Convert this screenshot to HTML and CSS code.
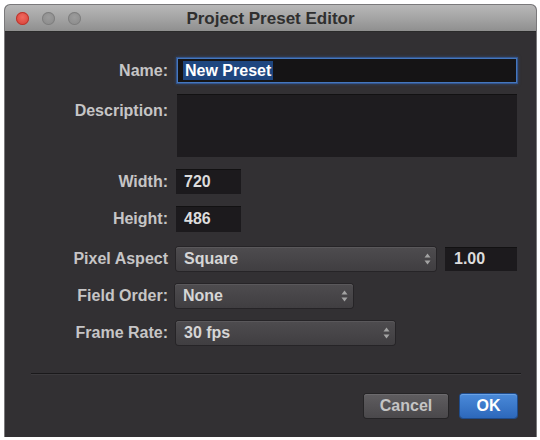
FILE: index.html
```html
<!DOCTYPE html>
<html>
<head>
<meta charset="utf-8">
<link rel="stylesheet" href="styles.css">
</head>
<body>
<div class="window">
  <div class="titlebar">
    <div class="lights">
      <span class="light close"></span>
      <span class="light"></span>
      <span class="light"></span>
    </div>
    <div class="title">Project Preset Editor</div>
    <div></div>
  </div>
  <div class="content">
    <div class="form">
      <div class="row">
        <div class="label">Name:</div>
        <div class="field name-field"><span class="sel">New Preset</span></div>
      </div>
      <div class="row row-top">
        <div class="label label-top">Description:</div>
        <div class="field desc-field"></div>
      </div>
      <div class="row">
        <div class="label">Width:</div>
        <div class="field num-field">720</div>
      </div>
      <div class="row">
        <div class="label">Height:</div>
        <div class="field num-field tall">486</div>
      </div>
      <div class="row popup-row first-popup">
        <div class="label">Pixel Aspect</div>
        <div class="pair">
          <div class="popup pa-popup"><span>Square</span>
            <svg class="arrows" width="7" height="12" viewBox="0 0 7 12"><path d="M3.5 0.5 L6.5 4.5 L0.5 4.5 Z M3.5 11.5 L6.5 7.5 L0.5 7.5 Z" fill="#a3a3a3"/></svg>
          </div>
          <div class="field ratio-field">1.00</div>
        </div>
      </div>
      <div class="row popup-row">
        <div class="label">Field Order:</div>
        <div class="popup fo-popup"><span>None</span>
          <svg class="arrows" width="7" height="12" viewBox="0 0 7 12"><path d="M3.5 0.5 L6.5 4.5 L0.5 4.5 Z M3.5 11.5 L6.5 7.5 L0.5 7.5 Z" fill="#a3a3a3"/></svg>
        </div>
      </div>
      <div class="row popup-row">
        <div class="label">Frame Rate:</div>
        <div class="popup fr-popup"><span>30 fps</span>
          <svg class="arrows" width="7" height="12" viewBox="0 0 7 12"><path d="M3.5 0.5 L6.5 4.5 L0.5 4.5 Z M3.5 11.5 L6.5 7.5 L0.5 7.5 Z" fill="#a3a3a3"/></svg>
        </div>
      </div>
    </div>
    <div class="sep"></div>
    <div class="buttons">
      <div class="btn cancel">Cancel</div>
      <div class="btn ok">OK</div>
    </div>
  </div>
</div>
</body>
</html>
```
FILE: styles.css
```css
html, body {
  margin: 0;
  padding: 0;
  background: #ffffff;
}
body {
  padding: 5px 0 0 5px;
  font-family: "Liberation Sans", Arial, sans-serif;
  font-weight: bold;
  font-size: 16px;
}
.window {
  width: 531px;
  height: 432px;
  background: #323033;
  border-radius: 5px 5px 0 0;
  box-shadow: 0 0 0 1px #7a797b;
  overflow: hidden;
  display: flex;
  flex-direction: column;
}
.titlebar {
  height: 26px;
  border-bottom: 1px solid #2a2a2a;
  background: linear-gradient(#b8b8b8, #a0a0a0 60%, #8f8f8f);
  display: grid;
  grid-template-columns: 1fr auto 1fr;
  align-items: center;
}
.lights {
  display: flex;
  gap: 13px;
  padding-left: 11px;
  padding-top: 1px;
}
.light {
  width: 13px;
  height: 13px;
  border-radius: 50%;
  background: radial-gradient(circle at 50% 40%, #9c9c9c, #888888);
  box-shadow: inset 0 0 0 1px #7e7e7e;
}
.light.close {
  background: radial-gradient(circle at 50% 40%, #f06a60, #d33a30);
  box-shadow: inset 0 0 0 1px #b8352d;
}
.title {
  font-size: 17px;
  color: #2f2f2f;
  padding-top: 1px;
}
.content {
  flex: 1;
  padding-top: 26px;
  display: flex;
  flex-direction: column;
}
.form {
  display: flex;
  flex-direction: column;
  gap: 12px;
}
.row {
  display: flex;
  align-items: center;
  gap: 8px;
}
.row-top {
  align-items: flex-start;
  margin-top: -1px;
}
.popup-row {
  margin-top: 1px;
}
.first-popup {
  margin-top: 3px;
}
.label {
  width: 163px;
  text-align: right;
  color: #c6c5c6;
  line-height: 18px;
  flex-shrink: 0;
}
.label-top {
  padding-top: 8px;
}
.field {
  box-sizing: border-box;
  background: #1c1a1d;
  color: #dcdcdc;
  height: 25px;
  line-height: 25px;
  padding-left: 8px;
  box-shadow: inset 0 1px 0 #121112;
}
.name-field {
  width: 340px;
  margin-left: 1px;
  background: #151415;
  border: 1px solid #4577bd;
  box-shadow: 0 0 0 1px rgba(52, 96, 165, 0.7), 0 0 3px 1px rgba(52, 96, 165, 0.5);
  line-height: 23px;
  padding-left: 5px;
  color: #ffffff;
}
.sel {
  background: #1e467f;
  padding: 1px 2px;
}
.desc-field {
  width: 340px;
  height: 63px;
  margin-left: 1px;
  background: #1e1c1f;
}
.num-field {
  width: 65px;
}
.num-field.tall {
  height: 26px;
  line-height: 26px;
}
.pair {
  display: flex;
  gap: 9px;
}
.ratio-field {
  width: 72px;
  height: 24px;
  line-height: 24px;
  padding-left: 9px;
}
.popup {
  box-sizing: border-box;
  height: 24px;
  border-radius: 3px;
  background: linear-gradient(#4e4c4f, #403e41);
  box-shadow: inset 0 1px 0 #5a585b, 0 0 0 1px #262427;
  color: #d6d6d6;
  display: flex;
  align-items: center;
  justify-content: space-between;
  padding: 0 5px 0 8px;
}
.pa-popup {
  width: 260px;
}
.fo-popup {
  width: 178px;
  margin-left: -1px;
}
.fr-popup {
  width: 219px;
}
.arrows {
  display: block;
}
.sep {
  margin: 28px 15px 0 26px;
  height: 1px;
  background: #1a191b;
  border-bottom: 1px solid #3c3a3d;
}
.buttons {
  display: flex;
  justify-content: flex-end;
  gap: 12px;
  margin-top: 19px;
  padding-right: 19px;
}
.btn {
  box-sizing: border-box;
  height: 24px;
  line-height: 24px;
  border-radius: 3px;
  text-align: center;
}
.cancel {
  width: 84px;
  background: linear-gradient(#5f5d60, #4a484b);
  box-shadow: inset 0 1px 0 #6c6a6d, 0 0 0 1px #252426;
  color: #c4c4c4;
}
.ok {
  width: 57px;
  background: linear-gradient(#4a8ad9, #2d68bb);
  box-shadow: inset 0 1px 0 #6aa2e6, 0 0 0 1px #1f4c8c;
  color: #ffffff;
}
```
